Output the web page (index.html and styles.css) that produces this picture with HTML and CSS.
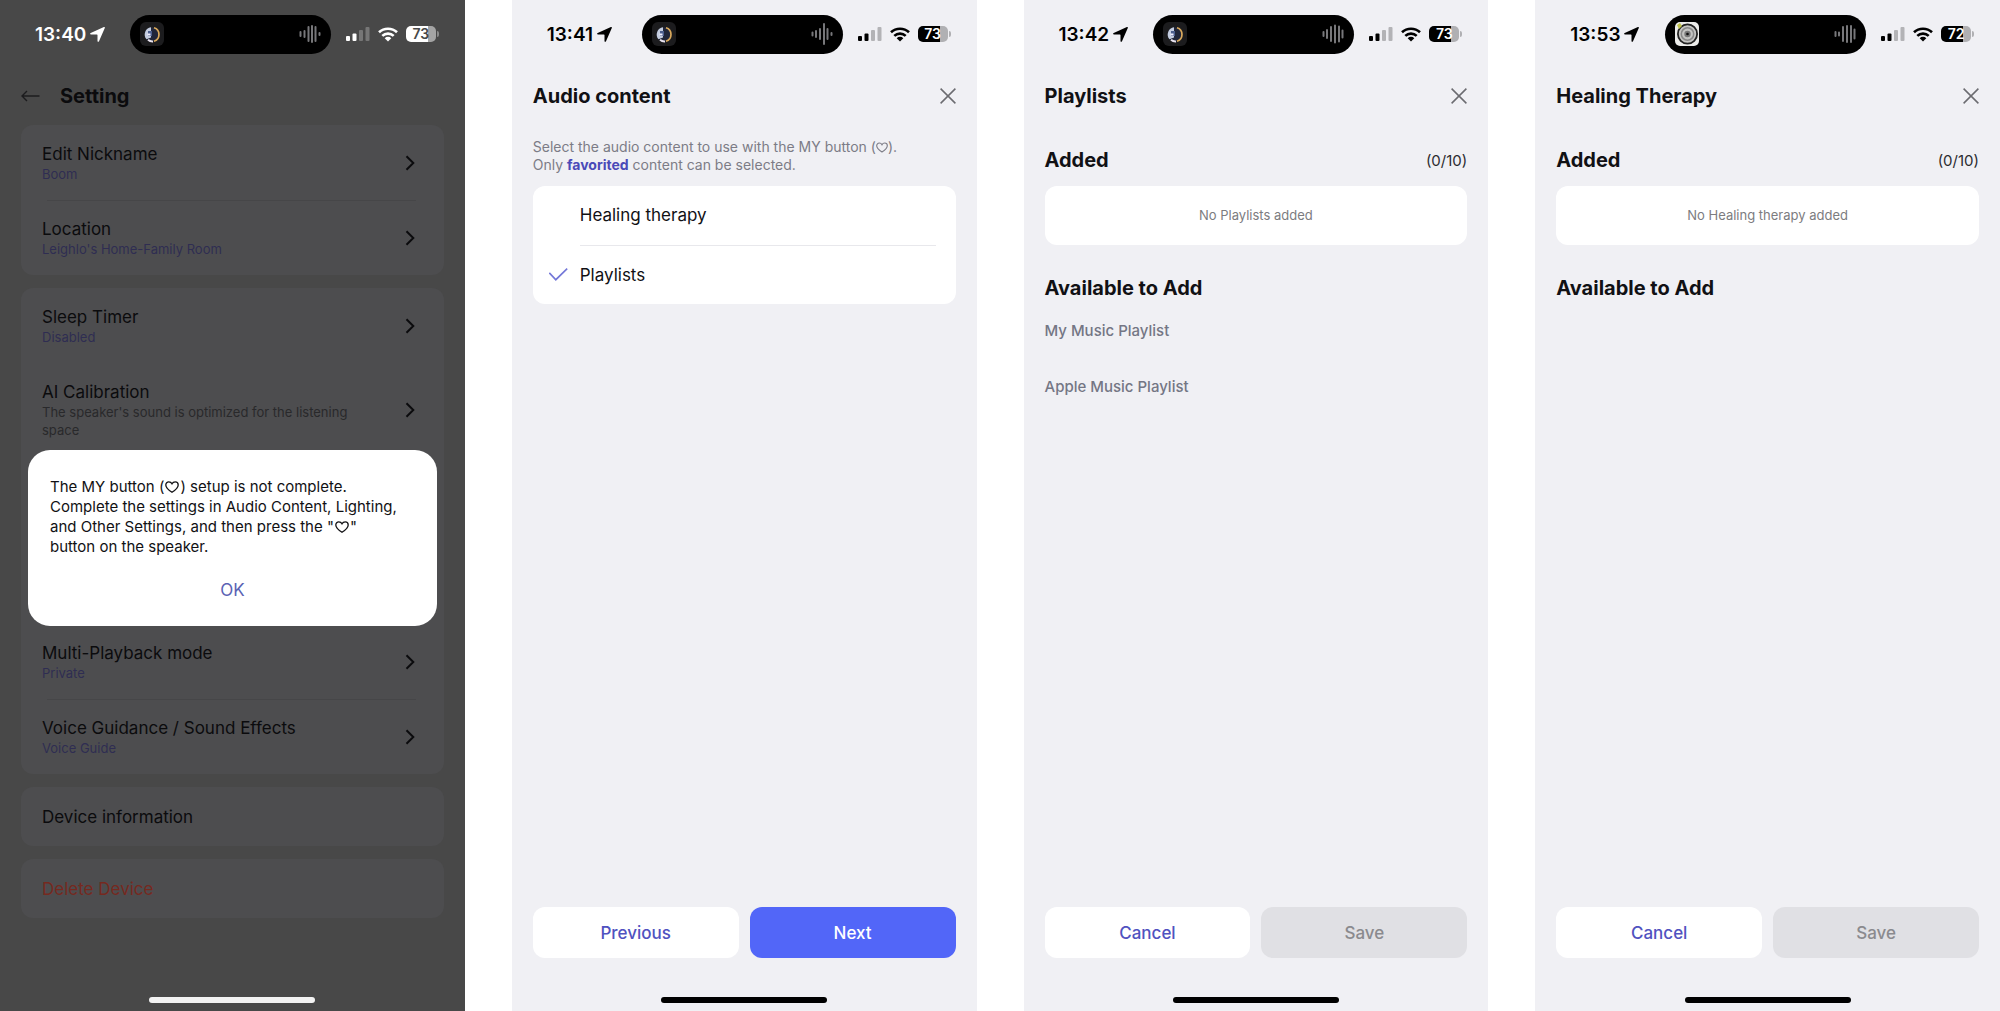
FILE: index.html
```html
<!DOCTYPE html>
<html lang="en">
<head>
<meta charset="utf-8">
<meta name="viewport" content="width=device-width, initial-scale=1">
<title>Speaker settings</title>
<link rel="stylesheet" href="styles.css">
</head>
<body>
<svg class="defs" aria-hidden="true">
  <symbol id="locate" viewBox="0 0 15 15"><path d="M13.900.1c.8-.3 1.200.2.900.9L9 14.300c-.4.900-1.500.7-1.500-.3V8c0-.4-.2-.6-.6-.6H1c-1 0-1.200-1.100-.3-1.500z"/></symbol>
  <symbol id="signal" viewBox="0 0 24 14"><rect x="0" y="9" width="4" height="5" rx="1"/><rect x="6.500" y="6.500" width="4" height="7.500" rx="1"/><g opacity=".25"><rect x="13" y="3" width="4" height="11" rx="1"/><rect x="19.500" y="0" width="4" height="14" rx="1"/></g></symbol>
  <symbol id="wifi" viewBox="0 0 20 15"><g fill="none" stroke="currentColor" stroke-width="2.600"><path d="M1 5.300a13 13 0 0 1 18 0"/><path d="M4.300 8.900a8.200 8.200 0 0 1 11.400 0"/></g><path d="M10 14.600l-3.300-3.400a4.700 4.700 0 0 1 6.600 0z"/></symbol>
  <symbol id="chevron" viewBox="0 0 10 16"><path d="M1.500 1.200L8.300 8l-6.800 6.800" fill="none" stroke="currentColor" stroke-width="2"/></symbol>
  <symbol id="close" viewBox="0 0 16 16"><path d="M.6.6l14.800 14.800M15.400.6L.6 15.400" fill="none" stroke="currentColor" stroke-width="1.500"/></symbol>
  <symbol id="back" viewBox="0 0 19 12"><path d="M18.500 6H1M6 1L1 6l5 5" fill="none" stroke="currentColor" stroke-width="1.400"/></symbol>
  <symbol id="heart" viewBox="0 0 14 12"><path d="M7 11.200C3.500 8.900.8 6.500.8 3.900.8 2.100 2.200.8 3.800.8 5.200.8 6.400 1.600 7 2.800 7.600 1.600 8.800.8 10.200.8c1.600 0 3 1.300 3 3.100 0 2.600-2.700 5-6.200 7.300z" fill="none" stroke="currentColor" stroke-width="1.300"/></symbol>
  <symbol id="art" viewBox="0 0 24 24"><rect width="24" height="24" rx="6" fill="#1c1c1e"/><circle cx="12" cy="12.500" r="7.300" fill="#20263a"/><path d="M11 5.300a7.300 7.300 0 0 0-4.500 12l4.500-1.800z" fill="#c3ccdf"/><path d="M8 9h4v5H8z" fill="#4c5f8e"/><path d="M7.500 11.500h3v2h-3z" fill="#eef"/><path d="M14 5.800a7 7 0 0 1 0 13.400" fill="none" stroke="#d9a95c" stroke-width="1.700"/><path d="M8 17.800a7 7 0 0 0 5 1.600" fill="none" stroke="#e8e2ee" stroke-width="2"/></symbol>
  <symbol id="record" viewBox="0 0 24 24"><rect width="24" height="24" rx="5" fill="#ececea"/><circle cx="12.500" cy="12" r="9.600" fill="#c4c4c2" stroke="#222" stroke-width="1.800"/><circle cx="12.500" cy="12" r="6.200" fill="none" stroke="#888" stroke-width="1.500"/><circle cx="12.500" cy="12" r="3.200" fill="#777"/><circle cx="12.500" cy="12" r="1.300" fill="#111"/><path d="M2 3l3-2 2 3-3 3z" fill="#bfc24a"/></symbol>
</svg>

<main class="screens">
  <section class="screen dimmed">
    <div class="status">
      <div class="clock"><span>13:40</span><svg class="locate"><use href="#locate"/></svg></div>
      <div class="island"><svg class="cover"><use href="#art"/></svg><svg class="wave" viewBox="0 0 22 22"><path d="M1.500 9v4M5.500 8v6M9.500 4v14M13 3v16M16.500 4v14M20.500 10v2"/></svg></div>
      <div class="meters"><svg class="signal"><use href="#signal"/></svg><svg class="wifi"><use href="#wifi"/></svg><span class="battery">73</span></div>
    </div>
    <header class="bar">
      <button class="icon-btn" aria-label="Back"><svg class="back"><use href="#back"/></svg></button>
      <h1 class="heading">Setting</h1>
    </header>
    <div class="settings">
      <div class="card">
        <button class="row"><span class="label">Edit Nickname<small class="value">Boom</small></span><svg class="chevron"><use href="#chevron"/></svg></button>
        <button class="row ruled"><span class="label">Location<small class="value">Leighlo's Home-Family Room</small></span><svg class="chevron"><use href="#chevron"/></svg></button>
      </div>
      <div class="card">
        <button class="row"><span class="label">Sleep Timer<small class="value">Disabled</small></span><svg class="chevron"><use href="#chevron"/></svg></button>
        <button class="row"><span class="label">AI Calibration<small class="value muted">The speaker's sound is optimized for the listening space</small></span><svg class="chevron"><use href="#chevron"/></svg></button>
        <div class="covered"></div>
        <button class="row"><span class="label">Multi-Playback mode<small class="value">Private</small></span><svg class="chevron"><use href="#chevron"/></svg></button>
        <button class="row ruled"><span class="label">Voice Guidance / Sound Effects<small class="value">Voice Guide</small></span><svg class="chevron"><use href="#chevron"/></svg></button>
      </div>
      <div class="card"><button class="row single">Device information</button></div>
      <div class="card"><button class="row single danger">Delete Device</button></div>
    </div>
    <div class="home"></div>
    <div class="dialog" role="alertdialog" aria-labelledby="msg">
      <p id="msg">The MY button (<svg class="heart" role="img" aria-label="heart"><use href="#heart"/></svg>) setup is not complete. Complete the settings in Audio Content, Lighting, and Other Settings, and then press the "<svg class="heart" role="img" aria-label="heart"><use href="#heart"/></svg>"<br>button on the speaker.</p>
      <button class="ok">OK</button>
    </div>
  </section>

  <section class="screen">
    <div class="status">
      <div class="clock"><span>13:41</span><svg class="locate"><use href="#locate"/></svg></div>
      <div class="island"><svg class="cover"><use href="#art"/></svg><svg class="wave" viewBox="0 0 22 22"><path d="M1.500 9.500v3M5 8v6M9 6v10M13 1v20M16.500 6v10M20.500 10v2"/></svg></div>
      <div class="meters"><svg class="signal"><use href="#signal"/></svg><svg class="wifi"><use href="#wifi"/></svg><span class="battery">73</span></div>
    </div>
    <header class="bar">
      <h1 class="heading">Audio content</h1>
      <button class="icon-btn end" aria-label="Close"><svg class="close"><use href="#close"/></svg></button>
    </header>
    <div class="content">
      <p class="hint">Select the audio content to use with the MY button (<svg class="heart small" role="img" aria-label="heart"><use href="#heart"/></svg>).<br>Only <b>favorited</b> content can be selected.</p>
      <div class="panel">
        <label class="option"><input class="tick" type="radio" name="source"><span>Healing therapy</span></label>
        <label class="option"><input class="tick" type="radio" name="source" checked><span>Playlists</span></label>
      </div>
    </div>
    <div class="actions"><button class="btn">Previous</button><button class="btn primary">Next</button></div>
    <div class="home"></div>
  </section>

  <section class="screen">
    <div class="status">
      <div class="clock"><span>13:42</span><svg class="locate"><use href="#locate"/></svg></div>
      <div class="island"><svg class="cover"><use href="#art"/></svg><svg class="wave" viewBox="0 0 22 22"><path d="M1.500 9v4M5 7v8M9 4v14M13 2.500v17M17 3.500v15M20.500 7.500v7"/></svg></div>
      <div class="meters"><svg class="signal"><use href="#signal"/></svg><svg class="wifi"><use href="#wifi"/></svg><span class="battery">73</span></div>
    </div>
    <header class="bar">
      <h1 class="heading">Playlists</h1>
      <button class="icon-btn end" aria-label="Close"><svg class="close"><use href="#close"/></svg></button>
    </header>
    <div class="content">
      <div class="added"><h2 class="heading">Added</h2><span class="count">(0/10)</span></div>
      <p class="panel empty">No Playlists added</p>
      <h2 class="heading available">Available to Add</h2>
      <h3 class="group">My Music Playlist</h3>
      <h3 class="group">Apple Music Playlist</h3>
    </div>
    <div class="actions"><button class="btn">Cancel</button><button class="btn" disabled>Save</button></div>
    <div class="home"></div>
  </section>

  <section class="screen">
    <div class="status">
      <div class="clock"><span>13:53</span><svg class="locate"><use href="#locate"/></svg></div>
      <div class="island"><svg class="cover"><use href="#record"/></svg><svg class="wave" viewBox="0 0 22 22"><path d="M1.500 9v4M5 9.500v3M9 4v14M13 3v16M17 3v16M20.500 6.500v9"/></svg></div>
      <div class="meters"><svg class="signal"><use href="#signal"/></svg><svg class="wifi"><use href="#wifi"/></svg><span class="battery">72</span></div>
    </div>
    <header class="bar">
      <h1 class="heading">Healing Therapy</h1>
      <button class="icon-btn end" aria-label="Close"><svg class="close"><use href="#close"/></svg></button>
    </header>
    <div class="content">
      <div class="added"><h2 class="heading">Added</h2><span class="count">(0/10)</span></div>
      <p class="panel empty">No Healing therapy added</p>
      <h2 class="heading available">Available to Add</h2>
    </div>
    <div class="actions"><button class="btn">Cancel</button><button class="btn" disabled>Save</button></div>
    <div class="home"></div>
  </section>
</main>
</body>
</html>
```
FILE: styles.css
```css
* { box-sizing: border-box; margin: 0; }

body {
  background: #fff;
  color: #111114;
  font-family: Inter, "Liberation Sans", sans-serif;
  font-size: 17px;
}

button {
  padding: 0;
  border: 0;
  background: none;
  color: inherit;
  font: inherit;
  text-align: left;
}

svg { display: block; fill: currentColor; }
.defs { position: absolute; width: 0; height: 0; }

.screens {
  display: grid;
  grid-template-columns: repeat(4, minmax(0, 1fr));
  gap: 47px;
  min-height: 100vh;
}

.screen {
  position: relative;
  display: flex;
  flex-direction: column;
  padding-bottom: 8px;
  background: #f0f0f4;
}

/* Status bar */
.status {
  display: grid;
  grid-template-columns: 130fr 201fr 134fr;
  align-items: center;
  height: 68px;
  color: #000;
}
.clock {
  display: flex;
  align-items: center;
  gap: 4px;
  padding-left: 35px;
  font-size: 19px;
  font-weight: 600;
}
.locate { width: 15px; height: 15px; }
.island {
  display: flex;
  align-items: center;
  justify-content: space-between;
  height: 39px;
  padding: 0 10px;
  border-radius: 20px;
  background: #000;
}
.cover { width: 24px; height: 24px; }
.wave { width: 22px; height: 22px; stroke: #77777a; stroke-width: 2; stroke-linecap: round; }
.meters { display: flex; align-items: center; gap: 8px; padding-left: 15px; }
.signal { width: 24px; height: 14px; }
.wifi { width: 20px; height: 15px; }
.battery {
  position: relative;
  width: 30px;
  height: 16px;
  border-radius: 5px;
  background: linear-gradient(90deg, #000 73%, #b0b0b3 73%);
  color: #fff;
  font-size: 14px;
  font-weight: 600;
  line-height: 16px;
  text-align: center;
}
.battery::after {
  content: "";
  position: absolute;
  top: 5px;
  right: -3px;
  width: 2px;
  height: 6px;
  border-radius: 0 2px 2px 0;
  background: #b0b0b3;
}

/* Title bar */
.bar {
  display: flex;
  align-items: center;
  height: 55px;
  padding: 0 21px;
}
.heading { font-size: 20px; font-weight: 700; line-height: 26px; }
.icon-btn { color: #6b6b70; }
.icon-btn.end { margin-left: auto; }
.close { width: 16px; height: 16px; }
.back { width: 19px; height: 12px; }

.content { padding: 2px 21px 0; }
.panel { border-radius: 12px; background: #fff; }
.heart {
  display: inline-block;
  width: 14px;
  height: 12px;
  margin: 0 1px;
  vertical-align: -1px;
}
.heart.small { width: 12px; height: 11px; margin: 0; }

.hint {
  padding: 13px 0 12px;
  color: #7c7c86;
  font-size: 14px;
  line-height: 18px;
}
.hint b { color: #4a4ab8; }

.option {
  display: flex;
  align-items: center;
  gap: 12px;
  height: 59px;
  padding: 0 20px 0 16px;
}
.option span { flex: 1; line-height: 59px; }
.option + .option span { border-top: 1px solid #e8e8ec; }
.tick { width: 19px; height: 13px; margin: 0; appearance: none; }
.tick:checked {
  background: #7478d8;
  clip-path: polygon(0 42%, 6% 32%, 37% 80%, 94% 0, 100% 9%, 37% 100%);
}

.added {
  display: flex;
  align-items: center;
  justify-content: space-between;
  padding: 22px 0 13px;
}
.count { color: #2c2c30; font-size: 15px; }
.empty {
  color: #7c7c80;
  font-size: 13px;
  line-height: 59px;
  text-align: center;
}
.available { padding: 30px 0 20px; }
.group {
  margin-bottom: 36px;
  color: #747684;
  font-size: 15px;
  font-weight: 500;
  line-height: 20px;
}

.actions {
  display: grid;
  grid-template-columns: 1fr 1fr;
  gap: 11px;
  margin-top: auto;
  padding: 0 21px 39px;
}
.btn {
  height: 51px;
  border-radius: 12px;
  background: #fff;
  color: #5052c0;
  font-weight: 500;
  text-align: center;
}
.btn.primary { background: #5266f8; color: #fff; }
.btn:disabled { background: #e0e0e4; color: #8a8a8e; }

.home {
  width: 166px;
  height: 6px;
  margin: 0 auto;
  border-radius: 3px;
  background: #000;
}

/* Settings list behind the alert */
.dimmed { background: #484848; color: #0b0b0d; }
.dimmed .status { color: #fff; }
.dimmed .battery { background: linear-gradient(90deg, #fff 73%, #a4a4a4 73%); color: #484848; }
.dimmed .battery::after { background: #8a8a8a; }
.dimmed .bar { gap: 20px; }
.dimmed .icon-btn { color: #1c1c1e; }
.dimmed .home { margin-top: auto; background: #f2f2f2; }

.settings { display: grid; gap: 13px; padding: 2px 21px 0; }
.card { border-radius: 12px; background: #4d4d4f; }
.row {
  position: relative;
  display: flex;
  align-items: center;
  width: 100%;
  padding: 18px 29px 17px 21px;
  line-height: 22px;
}
.row.single { padding: 19px 21px 18px; }
.row.ruled::before {
  content: "";
  position: absolute;
  top: 0;
  right: 28px;
  left: 26px;
  height: 1px;
  background: #464648;
}
.label { flex: 1; padding-right: 36px; }
.value { display: block; color: #2f2d52; font-size: 13px; line-height: 18px; }
.value.muted { color: #29292b; }
.chevron { width: 10px; height: 16px; }
.danger { color: #76291f; }
.covered { height: 168px; }

.dialog {
  position: absolute;
  top: 450px;
  right: 28px;
  left: 28px;
  display: flex;
  flex-direction: column;
  padding: 27px 22px 24px;
  border-radius: 22px;
  background: #fff;
  color: #111114;
  font-size: 15px;
  line-height: 20px;
}
.ok {
  align-self: center;
  margin-top: 21px;
  color: #5a62b4;
  font-size: 17px;
  line-height: 24px;
}
```
